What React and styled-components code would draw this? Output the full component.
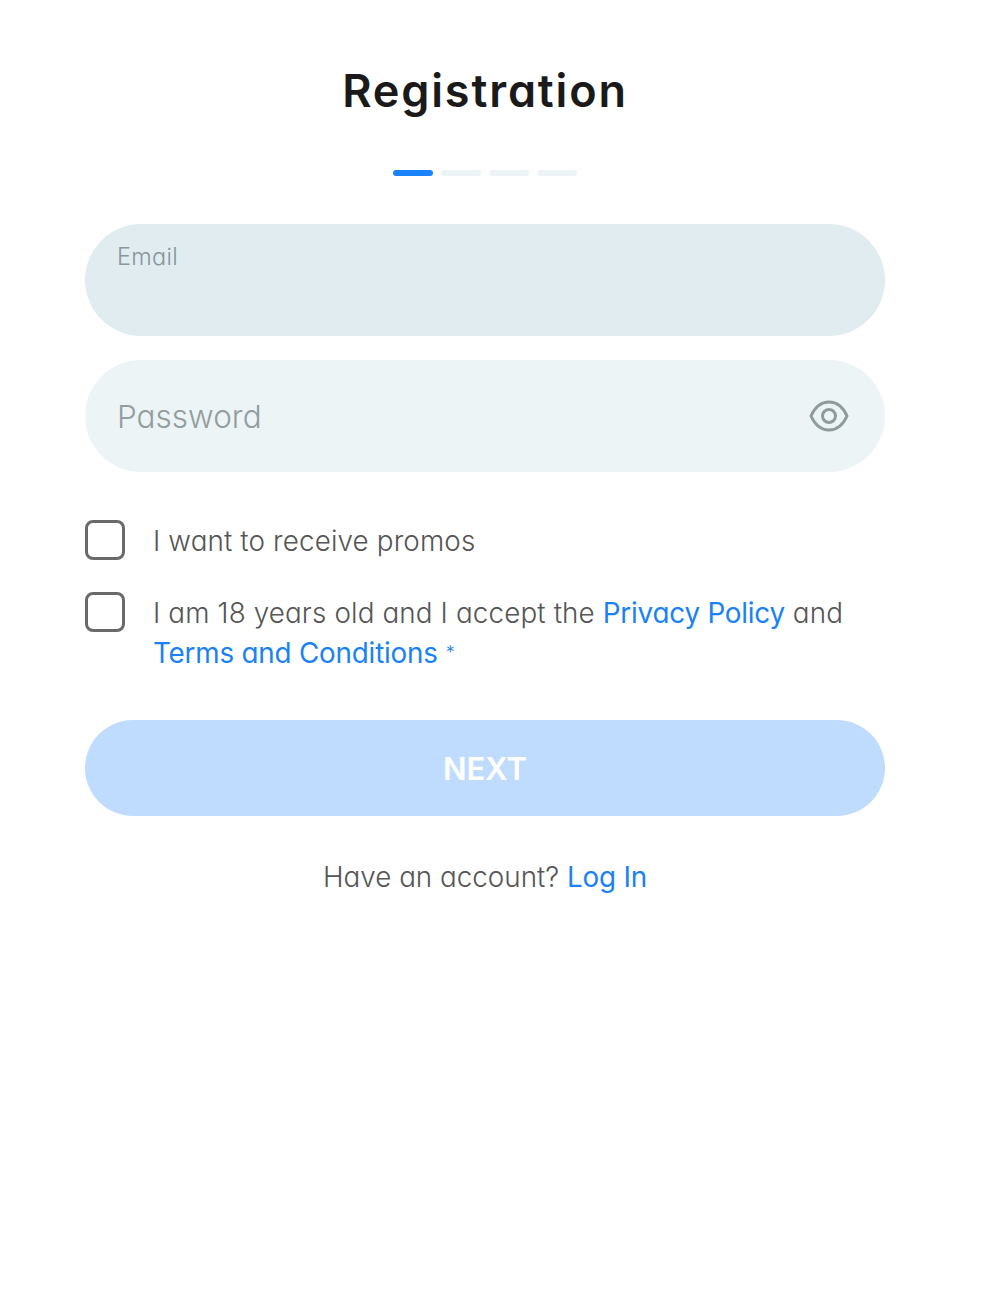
import React from 'react';
import styled, { createGlobalStyle } from 'styled-components';

const Global = createGlobalStyle`
  html, body { margin: 0; padding: 0; background: #fff; }
  body { font-family: "Inter", sans-serif; font-feature-settings: "cv11" 1; }
`;
const Page = styled.div`
  width: 993px; height: 1306px; box-sizing: border-box; padding: 0 108px 0 85px;
  display: flex; flex-direction: column; overflow: hidden;
`;
const Title = styled.h1`
  margin: 64px 0 0; height: 54px; text-align: center; font: 600 45px/54px "Inter", sans-serif; color: #1a1a1a;
  letter-spacing: 1.85px; font-feature-settings: "cv11" 1;
`;
const Steps = styled.div`display: flex; justify-content: center; gap: 8px; margin-top: 52px;`;
const Step = styled.span`width: 40px; height: 6px; border-radius: 3px; background: ${p => p.$on ? '#1a82fb' : '#edf4f6'};`;
const Field = styled.div`
  height: 112px; border-radius: 56px; background: ${p => p.$focus ? '#e1ecf0' : '#edf4f6'}; margin-top: ${p => p.$top}px;
  box-sizing: border-box; padding: 0 36px 0 32px; display: flex; align-items: ${p => p.$focus ? 'flex-start' : 'center'}; justify-content: space-between;
`;
const Small = styled.span`font: 300 23.5px/28px "Inter", sans-serif; letter-spacing: 0.3px; color: #87969b; margin-top: 19px; font-feature-settings: "cv11" 1;`;
const Placeholder = styled.span`font: 300 31.5px/40px "Inter", sans-serif; color: #929d9f; margin-top: 2px; font-feature-settings: "cv11" 1;`;
const Row = styled.div`display: flex; gap: 28px; margin-top: ${p => p.$top}px;`;
const Box = styled.span`width: 40px; height: 40px; box-sizing: border-box; border: 3px solid #6a6a6a; border-radius: 8px; flex: none;`;
const Label = styled.div`font: 300 27.8px/40px "Inter", sans-serif; letter-spacing: 0.13px; color: #555; width: 720px; margin: 1px 0 -1px; font-feature-settings: "cv11" 1;`;
const A = styled.span`color: #1a82f5; font-weight: 400; letter-spacing: -0.2px;`;
const Star = styled.span`color: #1a82f5; font-size: 18px; line-height: 1; vertical-align: 4px;`;
const Next = styled.div`
  margin-top: 48px; height: 96px; border-radius: 48px; background: #bfdcfe; color: #fff; padding-top: 2px; box-sizing: border-box;
  display: flex; align-items: center; justify-content: center; font: 600 31px/40px "Inter", sans-serif;
`;
const Foot = styled.div`margin-top: 41px; text-align: center; font: 300 27.8px/40px "Inter", sans-serif; color: #555; font-feature-settings: "cv11" 1;`;
const Eye = () => (
  <svg width="40" height="32" viewBox="0 0 40 32" fill="none" stroke="#8f9b9d" strokeWidth="3">
    <path d="M2 16C6 7 12 2 20 2s14 5 18 14c-4 9-10 14-18 14S6 25 2 16Z" />
    <circle cx="20" cy="16" r="6.5" />
  </svg>
);
export default function App() {
  return (
    <Page>
      <Global />
      <Title>Registration</Title>
      <Steps><Step $on /><Step /><Step /><Step /></Steps>
      <Field $focus $top={48}><Small>Email</Small></Field>
      <Field $top={24}><Placeholder>Password</Placeholder><Eye /></Field>
      <Row $top={48}><Box /><Label>I want to receive promos</Label></Row>
      <Row $top={32}><Box /><Label>I am 18 years old and I accept the <A>Privacy Policy</A> and <A>Terms and Conditions</A> <Star>*</Star></Label></Row>
      <Next>NEXT</Next>
      <Foot>Have an account? <A>Log In</A></Foot>
    </Page>
  );
}
